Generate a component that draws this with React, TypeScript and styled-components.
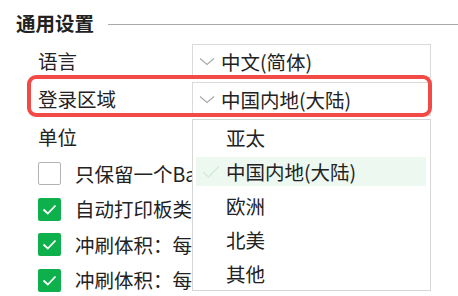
import React from 'react';
import styled, { createGlobalStyle } from 'styled-components';

const GlobalStyle = createGlobalStyle`
  html, body {
    margin: 0;
    padding: 0;
    background: #fff;
    overflow: hidden;
  }
  body {
    font-family: "Noto Sans CJK SC", "Noto Sans", sans-serif;
    color: #222;
  }
`;

const Page = styled.div`
  width: 458px;
  height: 296px;
  padding: 12px 0 0 16px;
  box-sizing: border-box;
  overflow: hidden;
`;

const SectionHeader = styled.div`
  display: flex;
  align-items: center;
  gap: 14px;
  height: 22px;
  width: 600px;
`;

const SectionTitle = styled.div`
  font-size: 19.5px;
  font-weight: 700;
  line-height: 22px;
  white-space: nowrap;
`;

const Rule = styled.div`
  flex: 1;
  height: 1px;
  background: #aaa;
  margin-top: 3px;
`;

const Form = styled.div`
  margin-top: 8px;
  padding-left: 22px;
  display: flex;
  flex-direction: column;
`;

const FieldRow = styled.div<{ $highlight?: boolean }>`
  position: relative;
  display: flex;
  align-items: center;
  height: 38px;
  z-index: ${(p) => (p.$highlight ? 2 : 1)};

  &::after {
    content: '';
    display: ${(p) => (p.$highlight ? 'block' : 'none')};
    position: absolute;
    top: -5px;
    left: -11px;
    width: 405px;
    height: 42px;
    border: 4px solid #f24a47;
    border-radius: 9px;
    box-sizing: border-box;
    pointer-events: none;
  }
`;

const Label = styled.div`
  width: 154px;
  font-size: 19.5px;
  line-height: 24px;
`;

const SelectBox = styled.div`
  position: relative;
  width: 239px;
  height: 34px;
  box-sizing: border-box;
  border: 1px solid #d9d9d9;
  background: #fff;
  display: flex;
  align-items: center;
  gap: 6px;
  padding-left: 6px;
  font-size: 19.5px;
`;

const Chevron = () => (
  <svg width="16" height="9" viewBox="0 0 16 9" fill="none">
    <path d="M1 1.5 L8 7.5 L15 1.5" stroke="#a8a8a8" strokeWidth="1.1" />
  </svg>
);

const Menu = styled.div`
  position: absolute;
  top: calc(100% + 4px);
  left: -1px;
  width: 239px;
  box-sizing: border-box;
  border: 1px solid #d6d6d6;
  background: #fff;
  padding: 2.5px 4px 2.5px 3px;
  display: flex;
  flex-direction: column;
  gap: 5px;
  z-index: 5;
`;

const MenuItem = styled.div<{ $active?: boolean }>`
  position: relative;
  height: 29px;
  padding-left: 30px;
  display: flex;
  align-items: center;
  font-size: 19.5px;
  background: ${(p) => (p.$active ? '#edf8f1' : 'transparent')};
  white-space: nowrap;
`;

const CheckGlyph = styled.svg`
  position: absolute;
  left: 5px;
  top: 8px;
`;

const OptionRow = styled.div`
  display: flex;
  align-items: center;
  gap: 14px;
  height: 35.5px;
`;

const Box = styled.div<{ $checked?: boolean }>`
  width: 23px;
  height: 23px;
  box-sizing: border-box;
  border-radius: 2px;
  border: ${(p) => (p.$checked ? 'none' : '1.5px solid #b3b3b3')};
  background: ${(p) => (p.$checked ? '#0db04b' : '#fff')};
  display: flex;
  align-items: center;
  justify-content: center;
  flex-shrink: 0;
`;

const OptionText = styled.div`
  font-size: 19.5px;
  line-height: 24px;
  white-space: nowrap;
  max-width: 117px;
  overflow: hidden;
`;

const regions = ['亚太', '中国内地(大陆)', '欧洲', '北美', '其他'];

const options = [
  { text: '只保留一个Barcode打印', checked: false },
  { text: '自动打印板类型标签', checked: true },
  { text: '冲刷体积：每孔加样后冲刷', checked: true },
  { text: '冲刷体积：每次吸液后冲刷', checked: true },
];

const Tick = () => (
  <svg width="15" height="11" viewBox="0 0 15 11" fill="none">
    <path d="M1.5 5.5 L5.8 9.5 L13.5 1.5" stroke="#fff" strokeWidth="1.8" />
  </svg>
);

export default function App() {
  return (
    <>
      <GlobalStyle />
      <Page>
        <SectionHeader>
          <SectionTitle>通用设置</SectionTitle>
          <Rule />
        </SectionHeader>
        <Form>
          <FieldRow>
            <Label>语言</Label>
            <SelectBox>
              <Chevron />
              <span>中文(简体)</span>
            </SelectBox>
          </FieldRow>
          <FieldRow $highlight>
            <Label>登录区域</Label>
            <SelectBox>
              <Chevron />
              <span>中国内地(大陆)</span>
              <Menu>
                {regions.map((r) => (
                  <MenuItem key={r} $active={r === '中国内地(大陆)'}>
                    {r === '中国内地(大陆)' && (
                      <CheckGlyph width="20" height="14" viewBox="0 0 20 14" fill="none">
                        <path d="M2 7 L7.5 12 L18 1.5" stroke="#d3ecdc" strokeWidth="1.6" />
                      </CheckGlyph>
                    )}
                    {r}
                  </MenuItem>
                ))}
              </Menu>
            </SelectBox>
          </FieldRow>
          <FieldRow>
            <Label>单位</Label>
            <SelectBox />
          </FieldRow>
          {options.map((o) => (
            <OptionRow key={o.text}>
              <Box $checked={o.checked}>{o.checked && <Tick />}</Box>
              <OptionText>{o.text}</OptionText>
            </OptionRow>
          ))}
        </Form>
      </Page>
    </>
  );
}
